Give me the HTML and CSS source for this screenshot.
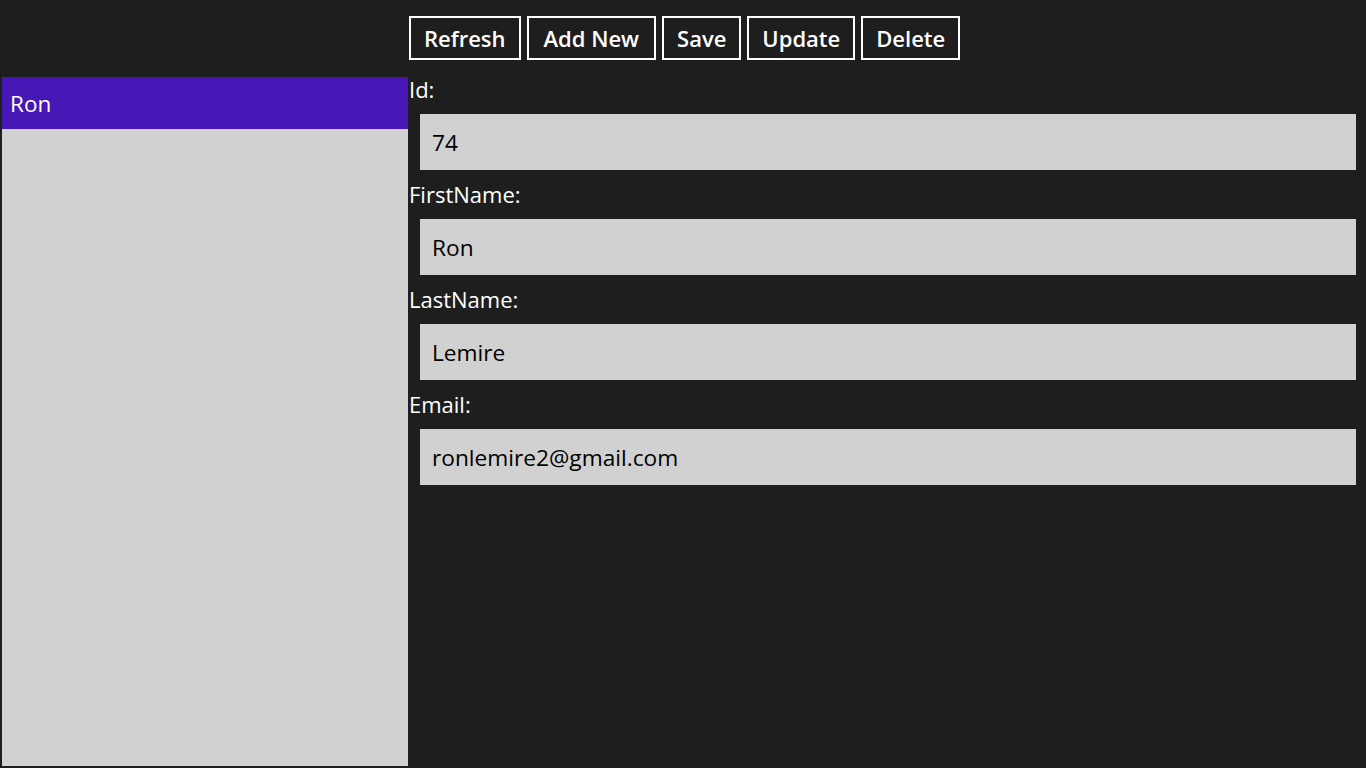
FILE: index.html
```html
<!DOCTYPE html>
<html>
<head>
<meta charset="utf-8">
<link rel="stylesheet" href="styles.css">
</head>
<body>
<div class="toolbar">
  <button class="btn">Refresh</button>
  <button class="btn">Add New</button>
  <button class="btn">Save</button>
  <button class="btn">Update</button>
  <button class="btn">Delete</button>
</div>
<div class="main">
  <div class="list">
    <div class="item selected">Ron</div>
  </div>
  <div class="form">
    <div class="label">Id:</div>
    <div class="input">74</div>
    <div class="label">FirstName:</div>
    <div class="input">Ron</div>
    <div class="label">LastName:</div>
    <div class="input">Lemire</div>
    <div class="label">Email:</div>
    <div class="input">ronlemire2@gmail.com</div>
  </div>
</div>
</body>
</html>
```
FILE: styles.css
```css
html, body {
  margin: 0;
  padding: 0;
  background: #1e1e1e;
  font-family: "Open Sans", "Noto Sans", sans-serif;
  color: #ffffff;
  height: 768px;
  overflow: hidden;
}
.toolbar {
  display: flex;
  gap: 6px;
  padding: 16px 0 17px 409px;
  height: 44px;
}
.btn {
  box-sizing: border-box;
  height: 44px;
  background: transparent;
  border: 2px solid #ffffff;
  color: #ffffff;
  font-family: "Open Sans", "Noto Sans", sans-serif;
  font-weight: 600;
  font-size: 22px;
  padding: 0 13px;
  margin: 0;
}
.btn:nth-child(2) {
  padding: 0 15px;
}
.main {
  display: grid;
  grid-template-columns: 406px 1fr;
  padding-left: 2px;
  height: 689px;
}
.list {
  background: #d1d1d1;
}
.item {
  height: 52px;
  line-height: 54px;
  padding-left: 8px;
  font-size: 22.5px;
  color: #ffffff;
}
.item.selected {
  background: #4617b4;
}
.form {
  display: flex;
  flex-direction: column;
}
.label {
  height: 31px;
  line-height: 24px;
  padding-left: 1px;
  font-size: 22px;
}
.input {
  box-sizing: border-box;
  height: 56px;
  margin: 6px 10px 12px 12px;
  background: #d1d1d1;
  color: #000000;
  font-size: 22.7px;
  line-height: 58px;
  padding-left: 12px;
}
```
